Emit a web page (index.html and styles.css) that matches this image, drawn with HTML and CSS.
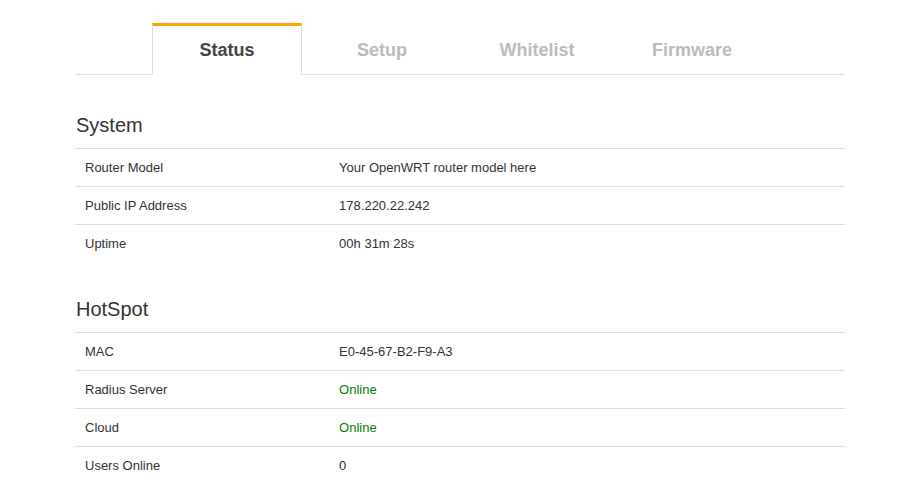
FILE: index.html
```html
<!DOCTYPE html>
<html lang="en">

<head>
    <meta charset="UTF-8" />
    <meta name="viewport" content="width=device-width, initial-scale=1.0" />
    <title>HotSpot - Status</title>
    <link rel="stylesheet" href="styles.css">
</head>

<body>
    <div class="container">
        <ul class="tabs">
            <li><a class="tab active" href="#">Status</a></li>
            <li><a class="tab" href="#">Setup</a></li>
            <li><a class="tab" href="#">Whitelist</a></li>
            <li><a class="tab" href="#">Firmware</a></li>
        </ul>

        <div class="section first">
            <h2>System</h2>
            <table class="info">
                <tr>
                    <td class="key">Router Model</td>
                    <td>Your OpenWRT router model here</td>
                </tr>
                <tr>
                    <td class="key">Public IP Address</td>
                    <td>178.220.22.242</td>
                </tr>
                <tr>
                    <td class="key">Uptime</td>
                    <td>00h 31m 28s</td>
                </tr>
            </table>
        </div>

        <div class="section">
            <h2>HotSpot</h2>
            <table class="info">
                <tr>
                    <td class="key">MAC</td>
                    <td>E0-45-67-B2-F9-A3</td>
                </tr>
                <tr>
                    <td class="key">Radius Server</td>
                    <td class="online">Online</td>
                </tr>
                <tr>
                    <td class="key">Cloud</td>
                    <td class="online">Online</td>
                </tr>
                <tr>
                    <td class="key">Users Online</td>
                    <td>0</td>
                </tr>
            </table>
        </div>
    </div>
</body>

</html>
```

FILE: styles.css
```css
:root {
    --text: #333;
    --line: #ddd;
    --accent: #ffa500;
    --muted: #bbb;
    --green: #008000;
}

body {
    margin: 0;
    font-family: 'Liberation Sans', Arial, sans-serif;
    color: var(--text);
    background: #fff;
}

.container {
    width: 770px;
    margin-left: 75px;
    padding-top: 23px;
}

.tabs {
    display: flex;
    justify-content: center;
    gap: 5px;
    list-style: none;
    margin: 0;
    padding: 0 1px 0 0;
    border-bottom: 1px solid var(--line);
}

.tabs li {
    margin-bottom: -1px;
}

.tab {
    display: block;
    width: 148px;
    padding: 14px 0 14px;
    border: 1px solid transparent;
    border-top-width: 3px;
    font-size: 18px;
    line-height: 20px;
    font-weight: bold;
    text-align: center;
    text-decoration: none;
    color: var(--muted);
}

.tab.active {
    color: #444;
    border-color: var(--line);
    border-top-color: var(--accent);
    border-bottom-color: #fff;
    background: #fff;
}

.section {
    margin-top: 36px;
}

.section.first {
    margin-top: 39px;
}

h2 {
    margin: 0 0 12px;
    padding-left: 1px;
    font-size: 20px;
    line-height: 22px;
    font-weight: normal;
    color: var(--text);
}

.info {
    width: 100%;
    border-collapse: collapse;
    font-size: 13px;
    line-height: 19px;
}

.info td {
    padding: 9px 10px;
    border-top: 1px solid var(--line);
    vertical-align: top;
}

.info .key {
    width: 33%;
}

.online {
    color: var(--green);
}
```
